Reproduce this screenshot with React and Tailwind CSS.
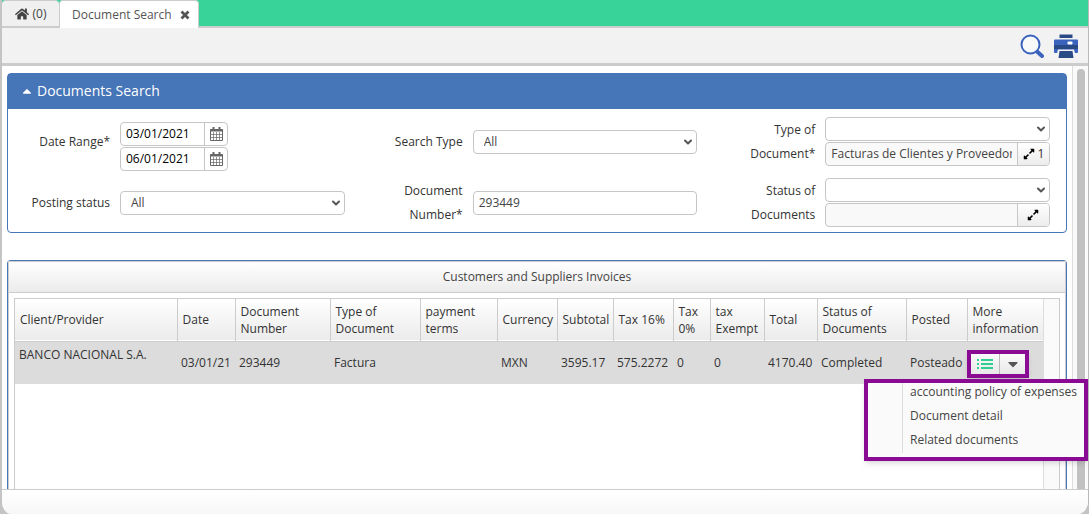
import React, { useState } from 'react';
import { FaHome, FaExpandAlt, FaCaretUp, FaCaretDown } from 'react-icons/fa';
import { ChevronDown } from 'lucide-react';

const columns = [
  { id: 'client', label: 'Client/Provider', width: 'w-auto', value: 'BANCO NACIONAL S.A.' },
  { id: 'date', label: 'Date', width: 'w-[58px]', value: '03/01/21' },
  { id: 'number', label: 'Document Number', width: 'w-[95px]', value: '293449' },
  { id: 'type', label: 'Type of Document', width: 'w-[90px]', value: 'Factura' },
  { id: 'terms', label: 'payment terms', width: 'w-[77px]', value: '' },
  { id: 'currency', label: 'Currency', width: 'w-[60px]', value: 'MXN' },
  { id: 'subtotal', label: 'Subtotal', width: 'w-[56px]', value: '3595.17' },
  { id: 'tax16', label: 'Tax 16%', width: 'w-[60px]', value: '575.2272' },
  { id: 'tax0', label: 'Tax 0%', width: 'w-[37px]', value: '0' },
  { id: 'exempt', label: 'tax Exempt', width: 'w-[54px]', value: '0' },
  { id: 'total', label: 'Total', width: 'w-[53px]', value: '4170.40' },
  { id: 'status', label: 'Status of Documents', width: 'w-[89px]', value: 'Completed' },
  { id: 'posted', label: 'Posted', width: 'w-[61px]', value: 'Posteado' },
];

const menuItems = ['accounting policy of expenses', 'Document detail', 'Related documents'];

const SearchIcon = () => (
  <svg viewBox="0 0 24 24" className="w-6 h-6">
    <path d="M17 17.500l5 4.500" stroke="#3a63bd" strokeWidth="4" strokeLinecap="round" />
    <circle cx="10.500" cy="10.500" r="9" fill="#f8fafa" stroke="#3a63bd" strokeWidth="2" />
  </svg>
);

const PrintIcon = () => (
  <svg viewBox="0 0 24 24" className="w-6 h-6">
    <path d="M5.500 0.500h13V4h-13z" fill="#2a4a86" />
    <path d="M1 5.500h22a1 1 0 0 1 1 1V18a1 1 0 0 1-1 1H1a1 1 0 0 1-1-1V6.500a1 1 0 0 1 1-1z" fill="#3a63bd" />
    <path d="M0 11h24v4H0z" fill="#2a4a86" />
    <rect x="13.500" y="7.500" width="5" height="3" rx="1" fill="#fff" />
    <path d="M4 15.500h16l1 4h-2v4H5v-4H3z" fill="#f3f3f3" />
    <path d="M5.500 17h13l1 7h-15z" fill="#2a4a86" />
  </svg>
);

const CalendarIcon = () => (
  <svg viewBox="0 0 13 14" className="w-[13px] h-3.5" fill="none" stroke="#666">
    <path d="M0.500 2.500h12v11h-12z" />
    <path d="M0 3.500h13" strokeWidth="2" />
    <path d="M3.500 0v4M9.500 0v4" strokeWidth="2" />
    <path d="M3.500 5v8M6.500 5v8M9.500 5v8M1 7.500h11M1 10.500h11" strokeWidth="0.700" />
  </svg>
);

const CloseIcon = () => (
  <svg viewBox="0 0 10 10" className="w-2.5 h-2.5" stroke="#555" strokeWidth="2.800">
    <path d="M1.500 1.500l7 7M8.500 1.500l-7 7" />
  </svg>
);

const ListIcon = () => (
  <svg viewBox="0 0 16 12" className="w-4 h-3" stroke="#2fcf92" strokeWidth="2">
    <path d="M4 2h12M4 6h12M4 10h12" />
    <path d="M0 2h2M0 6h2M0 10h2" />
  </svg>
);

const Field = ({ id, label, children }) => (
  <div className="h-[61px] flex items-center gap-2.5 pr-4">
    <label htmlFor={id} className="w-[102px] shrink-0 pl-4 text-right leading-6">{label}</label>
    <div className="flex-1 min-w-0">{children}</div>
  </div>
);

const Select = ({ id, options }) => (
  <div className="relative">
    <select id={id} className="block w-full h-6 pl-2.5 pr-6 appearance-none border border-[#c6c6c6] rounded-sm bg-white text-[#444]">
      {options.map((option) => (
        <option key={option}>{option}</option>
      ))}
    </select>
    <ChevronDown className="absolute right-[3px] top-1.5 w-3 h-3 text-[#555] pointer-events-none" strokeWidth={4} />
  </div>
);

const DateInput = ({ id, value, label }) => (
  <div className="flex w-[108px] h-6 border border-[#c6c6c6] rounded-sm bg-white">
    <input id={id} aria-label={label} defaultValue={value} className="flex-1 min-w-0 px-[5px] text-black outline-none" />
    <button type="button" aria-label="Open calendar" className="w-[23px] flex items-center justify-center border-l border-[#c6c6c6]">
      <CalendarIcon />
    </button>
  </div>
);

const MultiSelect = ({ id, value, count, label }) => (
  <div className="flex flex-col gap-px">
    <Select id={id} options={['']} />
    <div className="flex h-6 border border-[#c6c6c6] rounded-sm bg-[#f9f9f9] overflow-hidden">
      <input aria-label={label} readOnly value={value} className="flex-1 min-w-0 ml-[5px] mr-[5px] text-[#444] outline-none" />
      <button type="button" aria-label="Expand selection" className="w-8 flex items-center justify-center gap-[3px] border-l border-[#c6c6c6] bg-linear-to-b from-white to-[#ececec]">
        <FaExpandAlt className="w-3 h-3 text-black" />
        {count && <span>{count}</span>}
      </button>
    </div>
  </div>
);

const MoreActions = () => {
  const [open, setOpen] = useState(true);

  return (
    <div className="relative w-[62px] h-7 border-4 border-[#8a0a94] shadow-md flex bg-linear-to-b from-[#fafafa] to-[#e8e8e8]">
      <button type="button" aria-label="List" className="w-[29px] flex items-center justify-center border-r border-[#bbb]">
        <ListIcon />
      </button>
      <button type="button" aria-label="More" onClick={() => setOpen(!open)} className="flex-1 flex items-center justify-center">
        <FaCaretDown className="w-4 h-4 text-[#555]" />
      </button>
      {open && (
        <div className="absolute z-10 top-[25px] -right-[63px] w-56 h-[82px] border-4 border-[#8a0a94] bg-[#fafafa] shadow-md flex">
          <div className="w-[35px] shrink-0 mb-1 border-r border-[#ddd]" />
          <ul className="-mt-[3px] pl-[7px] text-[#444] leading-6 whitespace-nowrap">
            {menuItems.map((item) => (
              <li key={item}>
                <button type="button" className="block">{item}</button>
              </li>
            ))}
          </ul>
        </div>
      )}
    </div>
  );
};

const App = () => {
  return (
    <div className="h-screen flex flex-col bg-[#c4c4c4] font-['Open_Sans',sans-serif] text-xs text-[#333]">
      <div className="flex-1 min-h-0 flex flex-col border-l-2 border-r border-l-[#c4c4c4] border-r-[#b8b8b8] rounded-b-xl bg-white overflow-hidden">
        {/* Tabs */}
        <div className="h-7 shrink-0 flex bg-[#38d399] border-b-2 border-[#ccc]">
          <button type="button" className="w-[57px] flex items-center justify-center gap-1 bg-[#f0f0f0] border-t border-[#ccc] rounded-t-sm text-[#444]">
            <FaHome className="w-3.5 h-3.5" />
            (0)
          </button>
          <div className="w-[140px] h-7 flex items-center justify-between pl-3 pr-2 bg-white border-x border-t border-[#ccc] rounded-t-sm text-[#555]">
            Document Search
            <button type="button" aria-label="Close tab">
              <CloseIcon />
            </button>
          </div>
        </div>

        {/* Toolbar */}
        <div className="h-[38px] shrink-0 flex items-center justify-end gap-2.5 pr-2.5 bg-[#f2f2f2] border-b-3 border-[#ccc]">
          <button type="button" aria-label="Search"><SearchIcon /></button>
          <button type="button" aria-label="Print"><PrintIcon /></button>
        </div>

        {/* Content */}
        <div className="flex-1 min-h-0 flex border-b border-[#ccc] overflow-hidden">
          <main className="flex-1 min-w-0 flex flex-col px-[5px] pt-[7px]">
            <section className="h-40 shrink-0 border border-[#4675b8] rounded-sm">
              <h2 className="h-[35px] flex items-center gap-[3px] pl-3 pb-0.5 bg-[#4675b8] text-white text-sm">
                <FaCaretUp className="w-3.5 h-3.5" />
                Documents Search
              </h2>
              <form className="grid grid-cols-3 pt-0.5">
                <Field id="dateFrom" label="Date Range*">
                  <div className="pt-2.5 flex flex-col gap-px">
                    <DateInput id="dateFrom" value="03/01/2021" />
                    <DateInput value="06/01/2021" label="Date to" />
                  </div>
                </Field>
                <Field id="searchType" label="Search Type">
                  <Select id="searchType" options={['All']} />
                </Field>
                <Field id="docType" label="Type of Document*">
                  <MultiSelect id="docType" value="Facturas de Clientes y Proveedores" count={1} label="Selected document types" />
                </Field>
                <Field id="posting" label="Posting status">
                  <Select id="posting" options={['All']} />
                </Field>
                <Field id="docNumber" label="Document Number*">
                  <input id="docNumber" defaultValue="293449" className="block w-full h-6 px-[5px] border border-[#c6c6c6] rounded-sm text-[#444]" />
                </Field>
                <Field id="docStatus" label="Status of Documents">
                  <MultiSelect id="docStatus" value="" label="Selected statuses" />
                </Field>
              </form>
            </section>

            <section className="mt-[27px] flex-1 flex flex-col border border-b-0 border-[#4675b8] rounded-t-sm">
              <h2 className="h-8 shrink-0 flex items-center justify-center border border-[#ccc] bg-linear-to-b from-white to-[#ebebeb] text-[#444]">
                Customers and Suppliers Invoices
              </h2>
              <div className="flex-1 flex flex-col border-x border-[#ccc] pt-[5px] px-[5px]">
                <div className="flex-1 flex border border-b-0 border-[#ccc]">
                  <div className="flex-1 min-w-0">
                    <table className="w-full table-fixed border-collapse">
                      <thead>
                        <tr className="h-[42px] bg-linear-to-b from-white to-[#ebebeb] border-b border-[#ccc]">
                          {columns.map((col) => (
                            <th key={col.id} className={`${col.width} pl-[5px] border-r border-[#ccc] text-left font-normal leading-[17px]`}>
                              {col.label}
                            </th>
                          ))}
                          <th className="w-[76px] pl-[5px] text-left font-normal leading-[17px]">More information</th>
                        </tr>
                      </thead>
                      <tbody>
                        <tr className="h-[43px] bg-[#dcdcdc]">
                          {columns.map((col) => (
                            <td key={col.id} className={`pl-1 whitespace-nowrap ${col.id === 'client' ? 'align-top pt-[5px]' : ''}`}>
                              {col.value}
                            </td>
                          ))}
                          <td className="pt-0.5"><MoreActions /></td>
                        </tr>
                      </tbody>
                    </table>
                  </div>
                  <div className="w-4 border-l border-[#ddd] bg-[#fafafa]" />
                </div>
              </div>
            </section>
          </main>

          {/* Scrollbar */}
          <div className="w-4 shrink-0 flex justify-center pt-[3px] border-l border-[#ddd] bg-[#fafafa]">
            <div className="w-2 rounded-t-full bg-[#c1c1c1]" />
          </div>
        </div>

        <footer className="h-6 shrink-0 bg-linear-to-b from-white to-[#f7f7f7]" />
      </div>
    </div>
  );
};

export default App;
